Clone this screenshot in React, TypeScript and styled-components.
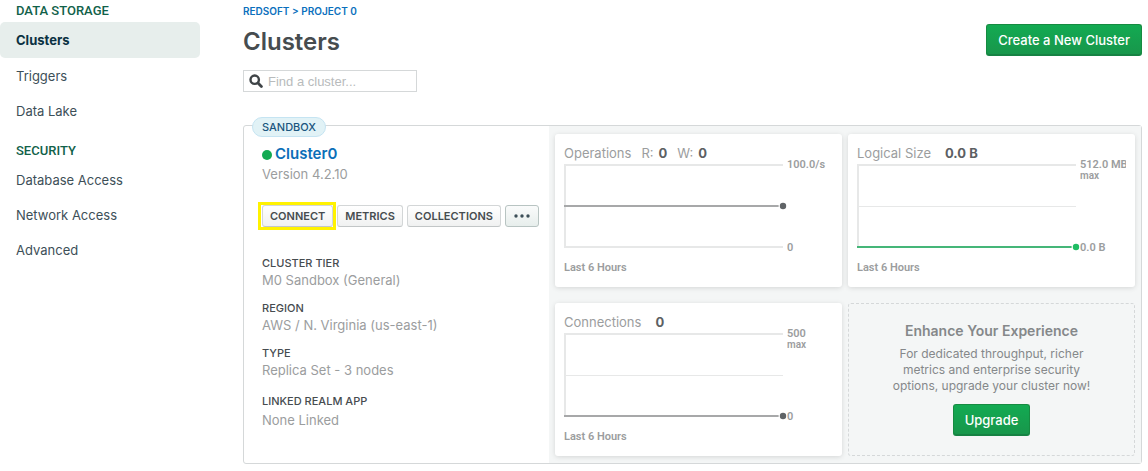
import React from "react";
import styled, { createGlobalStyle, css } from "styled-components";

const GlobalStyle = createGlobalStyle`
  *, *::before, *::after { box-sizing: border-box; }
  body {
    margin: 0;
    background: #fff;
    color: #464c4f;
    font-family: Inter, "Liberation Sans", sans-serif;
    font-size: 13px;
  }
  h1, h2, h3, p, ul, dl, dd { margin: 0; padding: 0; }
  button, input { font-family: inherit; }
`;

const Page = styled.div`
  display: flex;
  align-items: flex-start;
  gap: 43px;
  padding: 3px 6px 7px 0;
`;

const Sidebar = styled.nav`
  flex: 0 0 200px;
`;

const NavHeading = styled.h2`
  padding-left: 16px;
  margin-bottom: 3px;
  font-family: Roboto, sans-serif;
  font-size: 13px;
  font-weight: 500;
  line-height: 16px;
  color: #116149;
  text-transform: uppercase;

  ul + & { margin-top: 15px; }
`;

const NavList = styled.ul`
  list-style: none;
`;

const NavLink = styled.a<{ $active?: boolean }>`
  display: flex;
  align-items: center;
  height: 35px;
  padding-left: 16px;
  color: #3d4f58;
  text-decoration: none;
  ${(p) =>
    p.$active &&
    css`
      height: 36px;
      border-radius: 5px;
      background: #e7eeec;
      color: #0b3142;
      font-weight: 700;
    `}
`;

const Main = styled.main`
  flex: 1;
  min-width: 0;
`;

const Breadcrumb = styled.div`
  font-size: 10px;
  font-weight: 600;
  line-height: 16px;
  color: #0b70bd;
  text-transform: uppercase;

  a { color: inherit; text-decoration: none; }
`;

const Header = styled.header`
  display: flex;
  justify-content: space-between;
  align-items: center;
  margin-top: 5px;
`;

const Title = styled.h1`
  padding-top: 4px;
  font-size: 24px;
  font-weight: 600;
  line-height: 28px;
`;

const PrimaryButton = styled.button`
  height: 32px;
  padding: 0 11px;
  border: 1px solid #168b41;
  border-bottom-color: #168243;
  border-radius: 3px;
  background: linear-gradient(#13aa52, #18964b);
  box-shadow: inset 0 -1px 0 #168243;
  color: #fff;
  font-size: 13px;
  font-weight: 500;
  white-space: nowrap;
`;

const SearchBox = styled.label`
  display: flex;
  align-items: center;
  gap: 5px;
  width: 174px;
  height: 22px;
  margin-top: 14px;
  padding-left: 5px;
  border: 1px solid #d5d8d9;

  svg { flex: none; }
`;

const SearchInput = styled.input`
  flex: 1;
  min-width: 0;
  padding: 0;
  border: 0;
  outline: 0;
  background: none;
  color: #464c4f;
  font-family: "Liberation Sans", sans-serif;
  font-size: 13px;

  &::placeholder { color: #b8bbbc; opacity: 1; }
`;

const ClusterCard = styled.section`
  position: relative;
  display: flex;
  margin-top: 33px;
  border: 1px solid #d5d8d9;
  border-radius: 3px;
`;

const TierBadge = styled.span`
  position: absolute;
  top: -9px;
  left: 8px;
  padding: 0 9px;
  border: 1px solid #c5e4f2;
  border-radius: 10px;
  background: #e1f2f6;
  color: #1a567e;
  font-size: 11px;
  font-weight: 500;
  line-height: 18px;
`;

const Info = styled.div`
  flex: 0 0 305px;
  padding: 18px 0 0 18px;
`;

const ClusterName = styled.h2`
  display: flex;
  align-items: center;
  gap: 3px;
  font-size: 15px;
  font-weight: 600;
  line-height: 20px;

  a { color: #0b6fb8; text-decoration: none; }
`;

const StatusDot = styled.span`
  width: 10px;
  height: 10px;
  margin-top: 2px;
  border-radius: 50%;
  background: #13aa52;
`;

const Version = styled.p`
  line-height: 20px;
  color: #9b9d9e;
`;

const Actions = styled.div`
  display: flex;
  gap: 4px;
  margin-top: 21px;
`;

const ActionButton = styled.button<{ $highlighted?: boolean; $menu?: boolean }>`
  display: flex;
  align-items: center;
  height: 22px;
  padding: 0 7px;
  border: 1px solid #d3d6d7;
  border-bottom-color: #c2c6c7;
  border-radius: 3px;
  background: linear-gradient(#fff, #f0f1f1);
  color: #464c4f;
  font-size: 11px;
  font-weight: 600;
  text-transform: uppercase;
  ${(p) =>
    p.$highlighted &&
    css`
      position: relative;

      &::after {
        content: "";
        position: absolute;
        inset: -4px -4px -4px -5px;
        border: 3px solid #fff200;
      }
    `}
  ${(p) =>
    p.$menu &&
    css`
      border-color: #b8c4c2;
      background: linear-gradient(#fafbfb, #e7eeec);
    `}
`;

const Details = styled.dl`
  display: grid;
  gap: 11px;
  margin-top: 28px;
`;

const Detail = styled.div<{ $linked?: boolean }>`
  dt {
    font-size: 11px;
    font-weight: 500;
    line-height: 16px;
    text-transform: uppercase;
  }
  dd {
    line-height: 18px;
    color: #9b9d9e;
  }
  ${(p) =>
    p.$linked &&
    css`
      padding-top: 3px;
      dd { padding-top: 2px; }
    `}
`;

const Metrics = styled.div`
  flex: 1;
  min-width: 0;
  display: grid;
  grid-template-columns: 1fr 1fr;
  gap: 16px 6px;
  padding: 8px 6px 7px;
  background: #f4f6f6;
`;

const MetricCard = styled.article`
  min-width: 0;
  padding: 10px 9px 11px;
  border-radius: 3px;
  background: #fff;
  box-shadow: 0 1px 5px rgba(0, 0, 0, 0.13);
`;

const MetricHeader = styled.h3`
  display: flex;
  font-size: 13px;
  font-weight: 400;
  line-height: 18px;
  color: #9b9d9e;
`;

const Reading = styled.span<{ $labelled?: boolean }>`
  margin-left: ${(p) => (p.$labelled ? 10 : 14)}px;

  strong { color: #5c6063; font-weight: 700; }
`;

const ReadingLabel = styled.span`
  margin-right: 5px;
`;

const ChartRow = styled.div`
  display: flex;
  align-items: center;
  gap: 4px;
  height: 84px;
  margin-top: 2px;
`;

const ChartSvg = styled.svg`
  flex: 1;
  min-width: 0;
  height: 84px;
  overflow: visible;
`;

const Scale = styled.div`
  flex: 0 0 46px;
  display: flex;
  flex-direction: column;
  justify-content: space-between;
  height: 96px;
  overflow: hidden;
  font-family: Roboto, sans-serif;
  font-size: 11px;
  font-weight: 600;
  line-height: 13px;
  white-space: nowrap;
  color: #9b9d9e;
`;

const ScaleNote = styled.div`
  font-size: 10px;
  line-height: 10px;
  height: 10px;
`;

const Period = styled.p`
  margin-top: 12px;
  font-family: Roboto, sans-serif;
  font-size: 11px;
  font-weight: 600;
  line-height: 16px;
  color: #9b9d9e;
`;

const UpgradePanel = styled.aside`
  display: flex;
  flex-direction: column;
  align-items: center;
  padding-top: 17px;
  border: 1px dashed #d5d8d9;
  border-radius: 3px;
  color: #85888a;
  text-align: center;

  h3 { font-size: 14px; font-weight: 600; line-height: 20px; }
  p {
    max-width: 210px;
    margin: 5px 0 10px;
    font-size: 12px;
    line-height: 16px;
  }
`;

const Search = () => (
  <svg width="14" height="14" viewBox="0 0 14 14" fill="none" stroke="#3f4447" aria-hidden="true">
    <circle cx="5.7" cy="5.7" r="4.2" strokeWidth="2.4" />
    <path d="M9 9l3.4 3.4" strokeWidth="2.8" strokeLinecap="round" />
  </svg>
);

const Dots = () => (
  <svg width="18" height="4" viewBox="0 0 18 4" fill="#3d4f58" aria-hidden="true">
    <circle cx="3" cy="2" r="1.7" />
    <circle cx="9" cy="2" r="1.7" />
    <circle cx="15" cy="2" r="1.7" />
  </svg>
);

type ChartProps = {
  color: "gray" | "green";
  level: "middle" | "bottom";
  top: string;
  max?: boolean;
  bottom: string;
};

const Chart = ({ color, level, top, max, bottom }: ChartProps) => {
  const y = level === "middle" ? 42 : 83;
  const green = color === "green";
  return (
    <ChartRow>
      <ChartSvg aria-hidden="true">
        <g fill="#e7e8e8">
          <rect width="100%" height="2" />
          <rect width="2" height="84" />
          {level === "middle" ? (
            <rect y="82" width="100%" height="2" />
          ) : (
            <rect y="42" width="100%" height="1" />
          )}
        </g>
        <rect y={y - 1} width="98%" height="2" fill={green ? "#45b678" : "#a7a8a9"} />
        <circle cx="100%" cy={y} r="3.2" fill={green ? "#1fbd63" : "#606467"} />
      </ChartSvg>
      <Scale>
        <div>
          {top}
          {max && <ScaleNote>max</ScaleNote>}
        </div>
        <div>{bottom}</div>
      </Scale>
    </ChartRow>
  );
};

export default function App() {
  return (
    <>
      <GlobalStyle />
      <Page>
        <Sidebar aria-label="Project">
          <NavHeading>Data Storage</NavHeading>
          <NavList>
            <li><NavLink href="#clusters" $active aria-current="page">Clusters</NavLink></li>
            <li><NavLink href="#triggers">Triggers</NavLink></li>
            <li><NavLink href="#data-lake">Data Lake</NavLink></li>
          </NavList>
          <NavHeading>Security</NavHeading>
          <NavList>
            <li><NavLink href="#database-access">Database Access</NavLink></li>
            <li><NavLink href="#network-access">Network Access</NavLink></li>
            <li><NavLink href="#advanced">Advanced</NavLink></li>
          </NavList>
        </Sidebar>
        <Main>
          <Breadcrumb>
            <a href="#org">Redsoft</a> &gt; <a href="#project">Project 0</a>
          </Breadcrumb>
          <Header>
            <Title>Clusters</Title>
            <PrimaryButton type="button">Create a New Cluster</PrimaryButton>
          </Header>
          <SearchBox>
            <Search />
            <SearchInput type="text" placeholder="Find a cluster..." aria-label="Find a cluster" />
          </SearchBox>
          <ClusterCard>
            <TierBadge>SANDBOX</TierBadge>
            <Info>
              <ClusterName>
                <StatusDot />
                <a href="#cluster0">Cluster0</a>
              </ClusterName>
              <Version>Version 4.2.10</Version>
              <Actions>
                <ActionButton type="button" $highlighted>Connect</ActionButton>
                <ActionButton type="button">Metrics</ActionButton>
                <ActionButton type="button">Collections</ActionButton>
                <ActionButton type="button" $menu aria-label="More actions"><Dots /></ActionButton>
              </Actions>
              <Details>
                <Detail><dt>Cluster Tier</dt><dd>M0 Sandbox (General)</dd></Detail>
                <Detail><dt>Region</dt><dd>AWS / N. Virginia (us-east-1)</dd></Detail>
                <Detail><dt>Type</dt><dd>Replica Set - 3 nodes</dd></Detail>
                <Detail $linked><dt>Linked Realm App</dt><dd>None Linked</dd></Detail>
              </Details>
            </Info>
            <Metrics>
              <MetricCard>
                <MetricHeader>
                  Operations
                  <Reading $labelled><ReadingLabel>R:</ReadingLabel><strong>0</strong></Reading>
                  <Reading $labelled><ReadingLabel>W:</ReadingLabel><strong>0</strong></Reading>
                </MetricHeader>
                <Chart color="gray" level="middle" top="100.0/s" bottom="0" />
                <Period>Last 6 Hours</Period>
              </MetricCard>
              <MetricCard>
                <MetricHeader>
                  Logical Size
                  <Reading><strong>0.0 B</strong></Reading>
                </MetricHeader>
                <Chart color="green" level="bottom" top="512.0 MB" max bottom="0.0 B" />
                <Period>Last 6 Hours</Period>
              </MetricCard>
              <MetricCard>
                <MetricHeader>
                  Connections
                  <Reading><strong>0</strong></Reading>
                </MetricHeader>
                <Chart color="gray" level="bottom" top="500" max bottom="0" />
                <Period>Last 6 Hours</Period>
              </MetricCard>
              <UpgradePanel>
                <h3>Enhance Your Experience</h3>
                <p>For dedicated throughput, richer metrics and enterprise security options, upgrade your cluster now!</p>
                <PrimaryButton type="button">Upgrade</PrimaryButton>
              </UpgradePanel>
            </Metrics>
          </ClusterCard>
        </Main>
      </Page>
    </>
  );
}
